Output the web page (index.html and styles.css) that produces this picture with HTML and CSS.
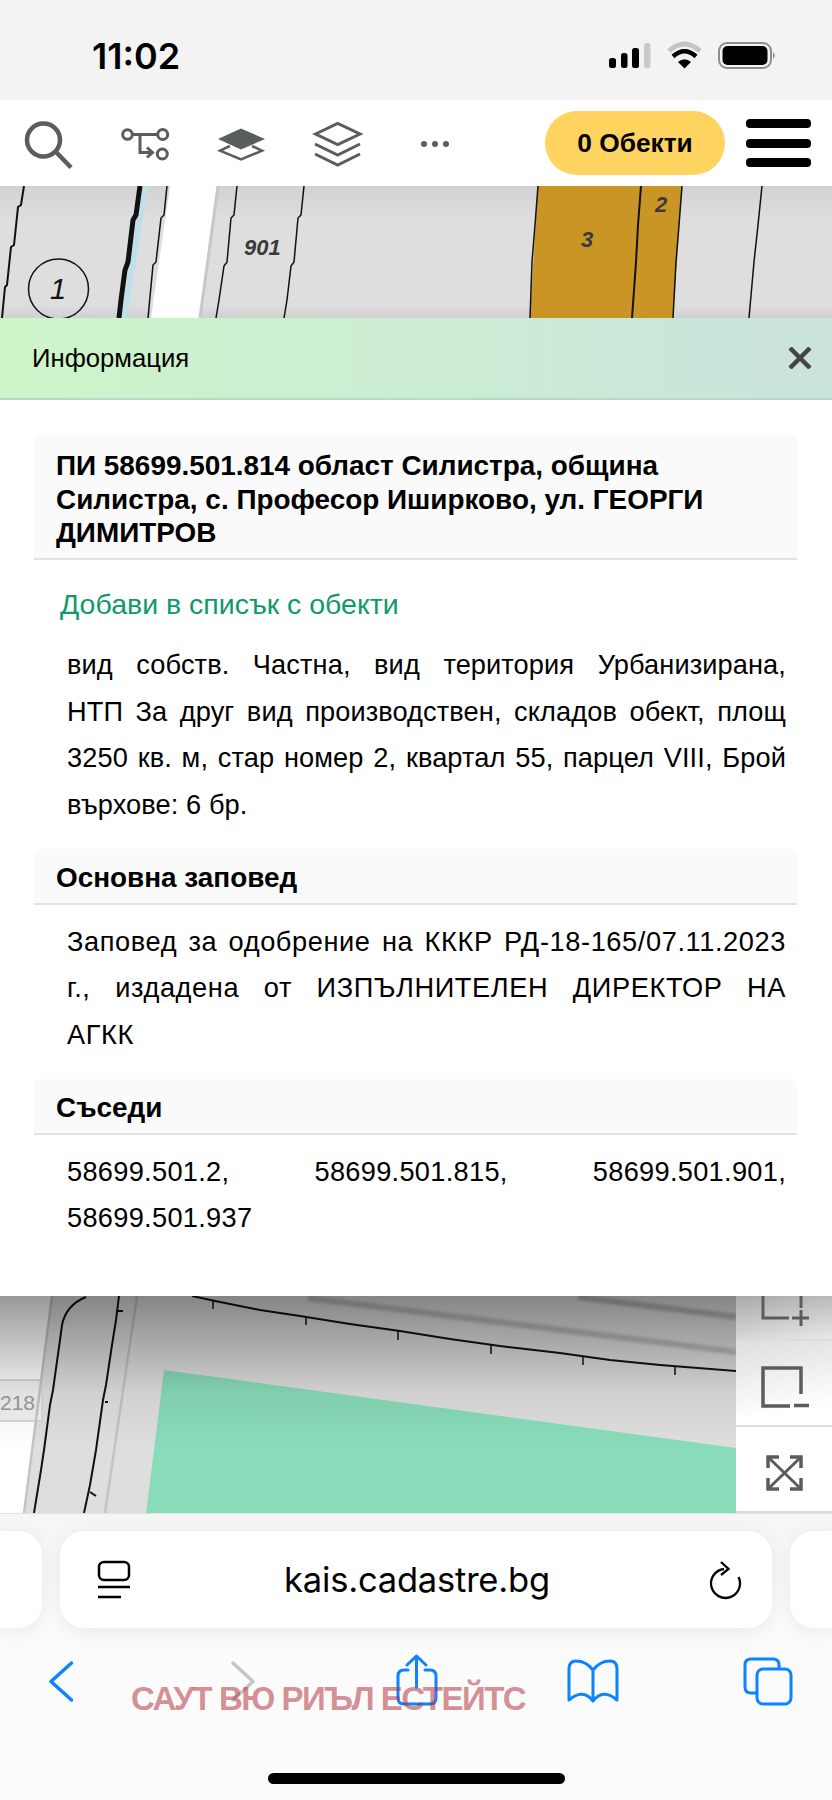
FILE: index.html
```html
<!DOCTYPE html>
<html lang="bg">
<head>
  <meta charset="UTF-8" />
  <meta name="viewport" content="width=device-width, initial-scale=1.0"/>
  <title>КАИС</title>
  <link rel="stylesheet" href="styles.css">
</head>
<body>

  <div class="status-bar">
    <div class="clock">11:02</div>
    <svg class="status-icons" viewBox="600 30 190 50" width="190" height="50">
      <rect x="609" y="58" width="7" height="10" rx="2.5" fill="#000"/>
      <rect x="621" y="53" width="6.5" height="15" rx="2.5" fill="#000"/>
      <rect x="632" y="48" width="7" height="20" rx="2.5" fill="#000"/>
      <rect x="644" y="43" width="6.5" height="25" rx="2.5" fill="#c9c9c9"/>
      <path d="M669 51 Q684.5 37 700 51" fill="none" stroke="#c4c4c4" stroke-width="5"/>
      <path d="M673 56.500 Q684.500 46 696 56.500" fill="none" stroke="#000" stroke-width="4.500"/>
      <path d="M678 62 Q684.500 56.500 691 62 L684.500 68.500 Z" fill="#000"/>
      <rect x="719" y="43" width="52" height="25" rx="8" fill="none" stroke="#8e8e8e" stroke-width="2"/>
      <rect x="722.500" y="46" width="45" height="19" rx="5" fill="#000"/>
      <path d="M773 52 Q776.500 55.500 773 59 Z" fill="#8e8e8e"/>
    </svg>
  </div>

  <div class="toolbar">
    <div class="tools">
      <svg viewBox="20 115 57 56" width="57" height="56" fill="none" stroke="#5a5e5b" stroke-width="4.500">
        <circle cx="43.500" cy="140" r="16.500"/>
        <path d="M56 152 L71 167.500"/>
      </svg>
      <svg viewBox="117 115 57 56" width="57" height="56" fill="none" stroke="#5a5e5b" stroke-width="3">
        <circle cx="127.500" cy="134.500" r="4.800"/>
        <circle cx="162.700" cy="134.500" r="5"/>
        <circle cx="162.300" cy="154" r="5"/>
        <path d="M132 134.500 H158 M140 134.500 V152.500 H152 M147 147.500 L152.500 152.500 L147 157.500"/>
      </svg>
      <svg viewBox="214 115 57 56" width="57" height="56" fill="none" stroke="#5a5e5b" stroke-width="2.500">
        <path d="M218 139 L241 128.500 L265 139 L241 149.500 Z" fill="#5a5e5b" stroke="none"/>
        <path d="M230 146 L220 150.700 L241 159.500 L262 150.700 L252 146"/>
      </svg>
      <svg viewBox="311 115 57 56" width="57" height="56" fill="none" stroke="#5a5e5b" stroke-width="3">
        <path d="M315.500 134 L337.700 123.500 L360 134 L337.700 144.500 Z"/>
        <path d="M315 144 L337.700 155 L360 144"/>
        <path d="M315 154 L337.700 165 L360 154"/>
      </svg>
      <svg viewBox="404 115 57 56" width="57" height="56" fill="#5a5e5b">
        <circle cx="420" cy="144" r="3"/>
        <circle cx="431" cy="144" r="3"/>
        <circle cx="442" cy="144" r="3"/>
      </svg>
    </div>
    <div class="objects-btn">0 Обекти</div>
    <div class="burger"><span></span><span></span><span></span></div>
  </div>

  <!-- map above the info panel -->
  <svg class="map-top" viewBox="0 186 832 132" width="832" height="132">
    <defs>
      <linearGradient id="topFade" x1="0" y1="0" x2="0" y2="1">
        <stop offset="0" stop-color="#d2d2d2"/>
        <stop offset="0.25" stop-color="#dedede"/>
        <stop offset="0.9" stop-color="#dedede"/>
        <stop offset="1" stop-color="#d0d0d0"/>
      </linearGradient>
    </defs>
    <rect x="0" y="186" width="832" height="132" fill="url(#topFade)"/>
    <polygon points="170,186 217,186 199,318 151,318" fill="#fff"/>
    <path d="M218 186 L200 318" stroke="#c8c8c8" stroke-width="3" fill="none"/>
    <polygon points="538,186 682,186 673,318 530,318" fill="#c99626"/>
    <path d="M145 186 L124 318" stroke="#bfe0ea" stroke-width="6" fill="none"/>
    <g fill="none" stroke="#111" stroke-width="2">
      <polyline points="24,186 21,205 18,207 14,245 11,247 7,285 5,287 2,318"/>
      <polyline points="140,186 136,215 133,220 128,262 125,270 121,300 119,318" stroke-width="5"/>
      <polyline points="167,186 164,215 161,218 156,262 153,265 148,318" stroke-width="1.500"/>
      <polyline points="237,186 234,215 231,218 227,262 224,266 219,300 216,318" stroke-width="1.500"/>
      <polyline points="304,186 301,215 298,218 294,262 291,266 287,300 284,318" stroke-width="1.500"/>
      <polyline points="538,186 535,225 532,262 530,318" stroke-width="1.500"/>
      <polyline points="682,186 679,225 676,262 673,318" stroke-width="1.500"/>
      <polyline points="641,186 638,225 636,262 632,318"/>
      <polyline points="762,186 758,225 754,262 749,318" stroke-width="1.500"/>
      <ellipse cx="58.500" cy="289" rx="30" ry="30" stroke-width="1.500"/>
    </g>
    <text x="244" y="255" class="map-label">901</text>
    <text x="581" y="247" class="map-label">3</text>
    <text x="655" y="212" class="map-label">2</text>
    <text x="50" y="299" class="map-num">1</text>
  </svg>

  <div class="info-head">
    <span>Информация</span>
    <svg viewBox="0 0 24 22" width="24" height="22" stroke="#444" stroke-width="4.500">
      <path d="M2 1 L22 21 M22 1 L2 21"/>
    </svg>
  </div>

  <div class="panel">
    <div class="section-title main">ПИ 58699.501.814 област Силистра, община Силистра, с. Професор Иширково, ул. ГЕОРГИ ДИМИТРОВ</div>
    <div class="add-link">Добави в списък с обекти</div>
    <p class="text first">вид собств. Частна, вид територия Урбанизирана, НТП&nbsp;За друг вид производствен, складов обект, площ 3250 кв. м, стар номер 2, квартал 55, парцел VIII, Брой върхове: 6 бр.</p>
    <div class="section-title">Основна заповед</div>
    <p class="text order">Заповед за одобрение на КККР РД-18-165/07.11.2023 г., издадена от ИЗПЪЛНИТЕЛЕН ДИРЕКТОР НА АГКК</p>
    <div class="section-title">Съседи</div>
    <p class="text">58699.501.2, 58699.501.815, 58699.501.901, 58699.501.937</p>
  </div>

  <div class="lower">
    <svg class="map-bottom" viewBox="0 1296 736 217" width="736" height="217">
      <defs>
        <linearGradient id="shade" x1="0" y1="0" x2="0" y2="1">
          <stop offset="0" stop-color="#000" stop-opacity="0.4"/>
          <stop offset="0.45" stop-color="#000" stop-opacity="0.06"/>
          <stop offset="0.7" stop-color="#000" stop-opacity="0"/>
        </linearGradient>
        <filter id="soft"><feGaussianBlur stdDeviation="1.5"/></filter>
      </defs>
      <rect x="0" y="1296" width="736" height="217" fill="#dedede"/>
      <polygon points="0,1296 52,1296 42,1380 0,1380" fill="#fff"/>
      <polygon points="0,1421 36,1421 23,1513 0,1513" fill="#fff"/>
      <rect x="-4" y="1380" width="46" height="41" fill="#f0f0f0" stroke="#d8d8d8" stroke-width="2"/>
      <text x="0" y="1410" class="map-218">218</text>
      <polygon points="164,1370 736,1448 736,1513 146,1513" fill="#88dcb9"/>
      <g fill="none" stroke="#c4c4c4" stroke-width="2.500">
        <path d="M52 1296 L24 1513"/>
        <path d="M137 1296 L105 1513"/>
      </g>
      <g fill="none" filter="url(#soft)">
        <path d="M308 1298 L736 1352" stroke-width="6" stroke="#b8b8b8"/>
        <path d="M578 1297 L736 1317" stroke-width="6" stroke="#b0b0b0"/>
      </g>
      <g fill="none" stroke="#111" stroke-width="2">
        <path d="M86 1297 Q66 1305 62 1325 L60 1340 L53 1390 L50 1405 L44 1450 L41 1470 L34 1513"/>
        <polyline points="119,1296 116,1320 112,1345 106,1385 103,1400 96,1450 90,1485 84,1513"/>
        <path d="M116 1311 H123 M105 1402 H108 M90 1492 L96 1496"/>
        <polyline points="192,1296 220,1302 260,1310 300,1316 350,1324 400,1331 450,1339 500,1346 560,1353 610,1360 660,1365 736,1371"/>
        <path d="M213 1300 V1309 M306 1316 V1325 M398 1331 V1340 M491 1345 V1354 M583 1356 V1365 M675 1366 V1375" stroke-width="1.500"/>
      </g>
      <rect x="0" y="1296" width="736" height="217" fill="url(#shade)"/>
    </svg>
    <div class="side-tools">
      <div class="side-btn shade-1">
        <svg viewBox="736 1296 96 45" width="96" height="45" fill="none" stroke="#5a5e5b" stroke-width="3">
          <path d="M763 1296 V1318 H789 M801 1296 V1308 M792 1318 H809 M801 1310 V1326"/>
        </svg>
      </div>
      <div class="side-btn shade-2">
        <svg viewBox="736 1341 96 86" width="96" height="86" fill="none" stroke="#5a5e5b" stroke-width="3.500">
          <path d="M790 1406 H763 V1368 H801 V1394 M794 1405.500 H809"/>
        </svg>
      </div>
      <div class="side-btn">
        <svg viewBox="736 1427 96 85" width="96" height="85" fill="none" stroke="#5a5e5b" stroke-width="3">
          <path d="M769 1458 L800 1488 M800 1458 L769 1488"/>
          <path d="M768 1468 V1457 H779 M790 1457 H801 V1468 M768 1478 V1489 H779 M790 1489 H801 V1478" stroke-width="3.500"/>
        </svg>
      </div>
    </div>
  </div>

  <div class="browser">
    <div class="url-row">
      <div class="side-pill left"></div>
      <div class="url-bar">
        <svg viewBox="0 0 34 40" width="34" height="40" fill="none" stroke="#000" stroke-width="2.500">
          <rect x="2" y="2" width="30" height="18" rx="5"/>
          <path d="M1 27 H33 M1 37 H24"/>
        </svg>
        <span class="url">kais.cadastre.bg</span>
        <svg viewBox="708 1555 36 44" width="36" height="44" fill="none" stroke="#000" stroke-width="2.300">
          <path d="M739.500 1574 A14.500 14.500 0 1 1 725 1566"/>
          <path d="M722 1559 L729.500 1566 L722 1572"/>
        </svg>
      </div>
      <div class="side-pill right"></div>
    </div>
    <div class="nav-row">
      <svg viewBox="32 1650 60 60" width="60" height="60" fill="none" stroke="#0a84ff" stroke-width="3.500" stroke-linecap="round" stroke-linejoin="round">
        <path d="M71.500 1662 L51 1680.500 L71.500 1699"/>
      </svg>
      <svg viewBox="208 1650 60 60" width="60" height="60" fill="none" stroke="#c6c6c6" stroke-width="3.500" stroke-linecap="round" stroke-linejoin="round">
        <path d="M233 1662 L253 1680.500 L233 1699"/>
      </svg>
      <svg viewBox="384 1650 60 60" width="60" height="60" fill="none" stroke="#0a84ff" stroke-width="3" stroke-linecap="round" stroke-linejoin="round">
        <path d="M408 1669 H404 Q398 1669 398 1675 V1697 Q398 1703 404 1703 H430 Q436 1703 436 1697 V1675 Q436 1669 430 1669 H425"/>
        <path d="M416.500 1686 V1656 M407 1664 L416.500 1655 L426 1664"/>
      </svg>
      <svg viewBox="560 1650 60 60" width="60" height="60" fill="none" stroke="#0a84ff" stroke-width="3" stroke-linejoin="round">
        <path d="M593 1669 Q586 1660 576 1660 Q569 1660 569 1668 V1699 Q583 1687 593 1700 Q603 1687 617 1699 V1668 Q617 1660 610 1660 Q600 1660 593 1669 V1700"/>
      </svg>
      <svg viewBox="736 1650 60 60" width="60" height="60" fill="none" stroke="#0a84ff" stroke-width="3">
        <path d="M756 1692 H751 Q745 1692 745 1686 V1664 Q745 1658 751 1658 H773 Q779 1658 779 1664 V1668"/>
        <rect x="757" y="1668" width="34" height="35" rx="6"/>
      </svg>
    </div>
    <div class="home-bar"></div>
    <div class="watermark">САУТ ВЮ РИЪЛ ЕСТЕЙТС</div>
  </div>

</body>
</html>
```

FILE: styles.css
```css
* {
  box-sizing: border-box;
}
html, body {
  margin: 0;
  padding: 0;
}
body {
  width: 832px;
  height: 1800px;
  overflow: hidden;
  font-family: 'Liberation Sans', Arial, sans-serif;
  color: #000;
  background: #fff;
}
svg {
  display: block;
  flex: none;
}

.status-bar {
  display: flex;
  justify-content: space-between;
  height: 100px;
  background: #f3f3f3;
}
.clock {
  font-family: 'Inter', sans-serif;
  font-weight: 600;
  font-size: 36px;
  line-height: 40px;
  margin: 36px 0 0 92px;
}
.status-icons {
  margin: 30px 42px 0 0;
}

.toolbar {
  display: flex;
  align-items: center;
  height: 86px;
  background: #fff;
  padding-left: 20px;
}
.tools {
  display: flex;
  gap: 40px;
}
.objects-btn {
  width: 180px;
  height: 64px;
  margin-left: 80px;
  background: #ffd35f;
  border-radius: 32px;
  font-weight: bold;
  font-size: 26.300px;
  line-height: 64px;
  text-align: center;
}
.burger {
  display: flex;
  flex-direction: column;
  gap: 10.500px;
  width: 65px;
  margin-left: 21px;
}
.burger span {
  height: 9px;
  background: #000;
  border-radius: 4px;
}

.map-label {
  font-family: 'Liberation Sans', sans-serif;
  font-size: 22px;
  font-weight: bold;
  font-style: italic;
  fill: #3a3a3a;
}
.map-num {
  font-family: 'Liberation Sans', sans-serif;
  font-size: 29px;
  font-style: italic;
  fill: #111;
}
.map-218 {
  font-family: 'Liberation Sans', sans-serif;
  font-size: 21px;
  fill: #9a9a9a;
}

.info-head {
  display: flex;
  justify-content: space-between;
  align-items: center;
  height: 82px;
  padding: 0 20px 0 32px;
  background: linear-gradient(90deg, #cdf5c9, #cae3dd);
  border-bottom: 2px solid #b3dcc4;
  font-size: 25.700px;
}

.panel {
  height: 896px;
  padding: 35px 35px 0 34px;
  background: #fff;
}
.section-title {
  padding: 12px 20px 8px 22px;
  background: #fafafa;
  border-bottom: 2px solid #e0e4e7;
  border-radius: 6px 6px 0 0;
  font-weight: bold;
  font-size: 27.900px;
  line-height: 33.500px;
}
.section-title.main {
  padding-top: 14px;
  padding-bottom: 8.500px;
}
.add-link {
  margin: 27px 0 0 26px;
  font-size: 28.500px;
  line-height: 34px;
  color: #0e9a6b;
}
.text {
  margin: 14px 11px 21px 33px;
  font-size: 27.200px;
  letter-spacing: 0.3px;
  word-spacing: 2px;
  line-height: 46.500px;
  text-align: justify;
}
.text.first {
  margin-top: 21px;
  letter-spacing: 0.1px;
  word-spacing: 0;
}
.text.order {
  letter-spacing: 0.6px;
}

.lower {
  display: flex;
  height: 217px;
}
.side-tools {
  width: 96px;
  background: #fff;
}
.side-btn {
  border-bottom: 2px solid #dcdcdc;
  height: 86px;
  overflow: hidden;
}
.side-btn.shade-1 {
  height: 45px;
  background: linear-gradient(170deg, #a9a9a9, #e8e8e8);
}
.side-btn.shade-2 {
  background: linear-gradient(170deg, #dedede, #ffffff 80%);
}

.browser {
  position: relative;
  height: 287px;
  padding-top: 17px;
  background: linear-gradient(180deg, #f5f5f5, #fbfbfb 35%);
  border-top: 1px solid #e2e2e2;
}
.url-row {
  display: flex;
  gap: 18px;
  height: 97px;
}
.side-pill {
  width: 42px;
  background: #fff;
  box-shadow: 0 4px 20px rgba(0, 0, 0, 0.07);
}
.side-pill.left {
  border-radius: 0 24px 24px 0;
}
.side-pill.right {
  border-radius: 24px 0 0 24px;
}
.url-bar {
  display: flex;
  align-items: center;
  justify-content: space-between;
  width: 712px;
  padding: 0 29px 0 37px;
  background: #fff;
  border-radius: 24px;
  box-shadow: 0 4px 20px rgba(0, 0, 0, 0.07);
}
.url {
  margin-right: 4px;
  font-family: 'Inter', sans-serif;
  font-size: 34.500px;
  letter-spacing: -0.2px;
}
.nav-row {
  display: flex;
  gap: 116px;
  margin-top: 23px;
  padding-left: 32px;
}
.home-bar {
  width: 297px;
  height: 11px;
  margin: 62px 0 0 268px;
  background: #000;
  border-radius: 6px;
}
.watermark {
  position: absolute;
  left: 131px;
  top: 167px;
  font-weight: bold;
  font-size: 33px;
  letter-spacing: -1.5px;
  line-height: 36px;
  color: rgba(178, 50, 60, 0.55);
  white-space: nowrap;
}
```
